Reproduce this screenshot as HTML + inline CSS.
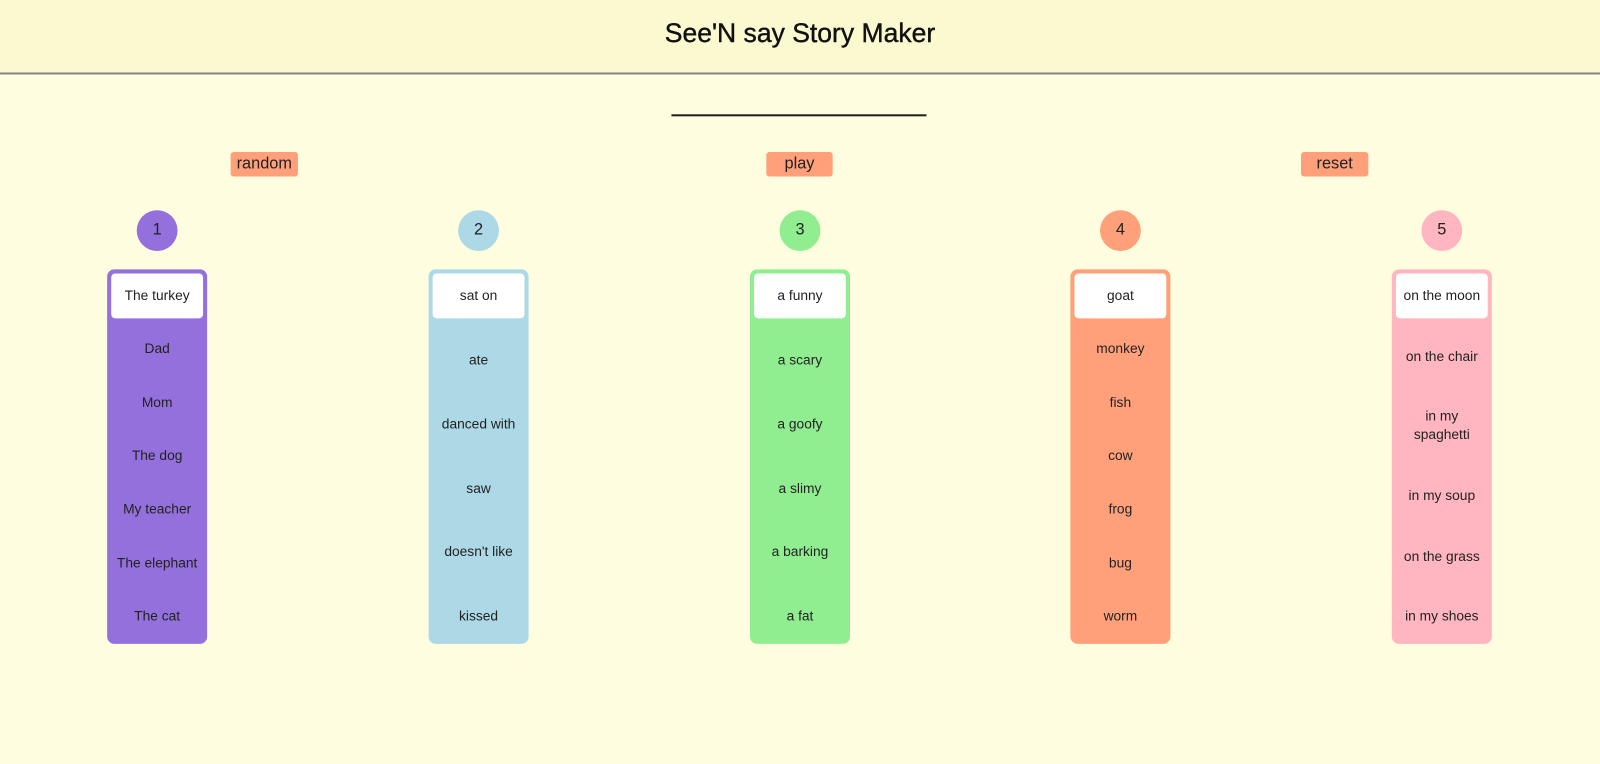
<!DOCTYPE html>
<html><head><meta charset="utf-8"><style>
*{margin:0;padding:0;box-sizing:border-box}
body{width:1600px;height:764px;background:#fffddf;font-family:"Liberation Sans",sans-serif;position:relative;overflow:hidden;color:#222}
#s{position:absolute;left:0;top:0;width:1568px;height:749px;transform:scale(1.0204);transform-origin:0 0}
.hdr{position:absolute;left:0;top:0;width:1568px;height:73px;background:#fbf9d0;border-bottom:2px solid #888;}
.hdr h1{position:absolute;left:0;width:1568px;top:17px;text-align:center;font-size:26px;font-weight:normal;color:#111;-webkit-text-stroke:0.4px #111}
.ul{position:absolute;left:658px;top:112px;width:250px;height:2px;background:#222}
.btn{position:absolute;top:149px;height:24px;background:#ffa07a;border-radius:3px;font-size:16px;text-align:center;line-height:24px;color:#222}
.c{position:absolute;top:206px;width:40px;height:40px;border-radius:50%;font-size:16px;text-align:center;line-height:40px;color:#222}
.col{position:absolute;top:264px;width:98px;height:367px;border-radius:7px}
.w{position:absolute;left:4px;top:4px;width:90px;height:44px;background:#fff;border-radius:4px;font-size:13.5px;text-align:center;line-height:44px}
.t{position:absolute;left:0;width:98px;text-align:center;font-size:13.5px;line-height:18px;transform:translateY(-9px)}
</style></head><body><div id="s">
<div class="hdr"><h1>See'N say Story Maker</h1></div>
<div class="ul"></div>
<div class="btn" style="left:226px;width:66px">random</div>
<div class="btn" style="left:751px;width:65px">play</div>
<div class="btn" style="left:1275px;width:66px">reset</div>

<div class="c" style="left:134px;background:#9370db">1</div>
<div class="c" style="left:449px;background:#add8e6">2</div>
<div class="c" style="left:764px;background:#90ee90">3</div>
<div class="c" style="left:1078px;background:#ffa07a">4</div>
<div class="c" style="left:1393px;background:#ffb6c1">5</div>

<div class="col" style="left:105px;background:#9370db">
<div class="w">The turkey</div>
<div class="t" style="top:78px">Dad</div>
<div class="t" style="top:131px">Mom</div>
<div class="t" style="top:183px">The dog</div>
<div class="t" style="top:235px">My teacher</div>
<div class="t" style="top:288px">The elephant</div>
<div class="t" style="top:340px">The cat</div>
</div>
<div class="col" style="left:420px;background:#add8e6">
<div class="w">sat on</div>
<div class="t" style="top:89px">ate</div>
<div class="t" style="top:152px">danced with</div>
<div class="t" style="top:215px">saw</div>
<div class="t" style="top:277px">doesn't like</div>
<div class="t" style="top:340px">kissed</div>
</div>
<div class="col" style="left:735px;background:#90ee90">
<div class="w">a funny</div>
<div class="t" style="top:89px">a scary</div>
<div class="t" style="top:152px">a goofy</div>
<div class="t" style="top:215px">a slimy</div>
<div class="t" style="top:277px">a barking</div>
<div class="t" style="top:340px">a fat</div>
</div>
<div class="col" style="left:1049px;background:#ffa07a">
<div class="w">goat</div>
<div class="t" style="top:78px">monkey</div>
<div class="t" style="top:131px">fish</div>
<div class="t" style="top:183px">cow</div>
<div class="t" style="top:235px">frog</div>
<div class="t" style="top:288px">bug</div>
<div class="t" style="top:340px">worm</div>
</div>
<div class="col" style="left:1364px;background:#ffb6c1">
<div class="w">on the moon</div>
<div class="t" style="top:86px">on the chair</div>
<div class="t" style="top:144px">in my<br>spaghetti</div>
<div class="t" style="top:222px">in my soup</div>
<div class="t" style="top:282px">on the grass</div>
<div class="t" style="top:340px">in my shoes</div>
</div>
</div></body></html>
